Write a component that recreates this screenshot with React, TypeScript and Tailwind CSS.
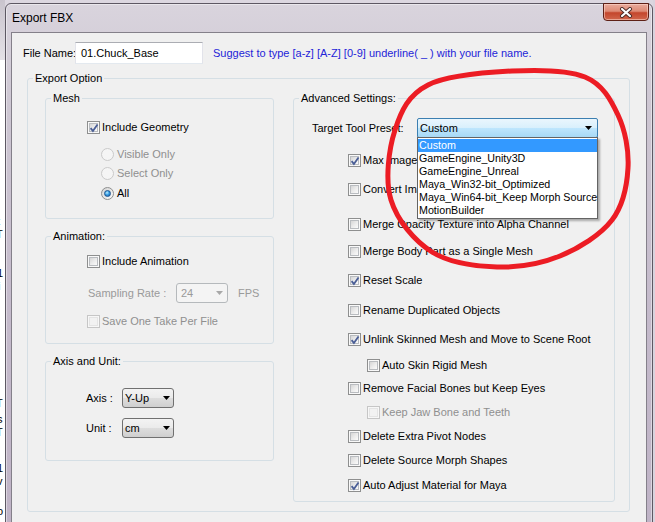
import React from "react";

type BoxProps = { checked?: boolean; disabled?: boolean };

function CheckBox({ checked, disabled }: BoxProps) {
  return (
    <span
      className={`relative flex h-[13px] w-[13px] shrink-0 items-center justify-center border ${
        disabled ? "border-[#c6c6c6] bg-[#f7f7f7]" : "border-[#8e8f8f] bg-[#f9f9f9]"
      }`}
    >
      <span
        className={`h-[9px] w-[9px] border ${
          disabled
            ? "border-[#e4e4e4] bg-[#f2f2f2]"
            : "border-[#b9bcc0] bg-gradient-to-br from-[#d6d6d6] via-[#ebebeb] to-[#fbfbfb]"
        }`}
      />
      {checked && (
        <svg className="absolute left-[1px] top-[1px]" width="10" height="10" viewBox="0 0 10 10">
          <path d="M1.6 5.1 L3.9 7.9 L8.5 1.4" fill="none" stroke="#4a5e96" strokeWidth="1.8" />
        </svg>
      )}
    </span>
  );
}

function Radio({ checked, disabled }: BoxProps) {
  return (
    <span
      className={`flex h-[13px] w-[13px] shrink-0 items-center justify-center rounded-full border ${
        disabled
          ? "border-[#cacaca] bg-[#f5f5f5]"
          : "border-[#8e8f8f] bg-gradient-to-br from-[#d4d4d4] to-[#fbfbfb]"
      }`}
    >
      {checked && (
        <span className="h-[7px] w-[7px] rounded-full border border-[#1d5590] bg-[radial-gradient(circle_at_40%_35%,#bdeeff_0%,#3aa0e6_45%,#0f5aa8_100%)]" />
      )}
    </span>
  );
}

function CheckRow({
  label,
  checked,
  disabled,
  className,
}: BoxProps & { label: string; className: string }) {
  return (
    <div className={`flex h-[13px] items-center gap-[2px] whitespace-nowrap ${className}`}>
      <CheckBox checked={checked} disabled={disabled} />
      <span className={disabled ? "text-[#8f8f8f]" : ""}>{label}</span>
    </div>
  );
}

function RadioRow({
  label,
  checked,
  disabled,
  className,
}: BoxProps & { label: string; className: string }) {
  return (
    <div className={`flex h-[13px] items-center gap-[3px] whitespace-nowrap ${className}`}>
      <Radio checked={checked} disabled={disabled} />
      <span className={disabled ? "text-[#8f8f8f]" : ""}>{label}</span>
    </div>
  );
}

function Arrow({ color }: { color: string }) {
  return (
    <svg width="7" height="4" viewBox="0 0 7 4" className="shrink-0">
      <path d="M0 0 H7 L3.5 4 Z" fill={color} />
    </svg>
  );
}

function Combo({
  value,
  className,
  disabled,
}: {
  value: string;
  className: string;
  disabled?: boolean;
}) {
  return (
    <div
      className={`flex h-[20px] shrink-0 items-center justify-between rounded-[3px] border ${
        disabled
          ? "border-[#b5b9bc] bg-[#f4f4f4] text-[#9a9a9a]"
          : "border-[#707070] bg-[linear-gradient(180deg,#f3f3f3_0%,#ebebeb_48%,#dddddd_52%,#cfcfcf_100%)]"
      } ${className}`}
    >
      <span>{value}</span>
      <Arrow color={disabled ? "#a8a8a8" : "#000000"} />
    </div>
  );
}

function Group({
  title,
  className,
  children,
}: {
  title: string;
  className: string;
  children?: React.ReactNode;
}) {
  return (
    <fieldset className={`min-w-0 rounded-[3px] border border-[#d5dfe5] ${className}`}>
      <legend className="ml-[5px] px-[2px] leading-[13px]">{title}</legend>
      {children}
    </fieldset>
  );
}

const presets = [
  "Custom",
  "GameEngine_Unity3D",
  "GameEngine_Unreal",
  "Maya_Win32-bit_Optimized",
  "Maya_Win64-bit_Keep Morph Source",
  "MotionBuilder",
];

const advanced: (BoxProps & { label: string; cls: string })[] = [
  { label: "Max Image Size", checked: true, cls: "mt-[16px] pl-[54px]" },
  { label: "Convert Image to PNG", cls: "mt-[16px] pl-[54px]" },
  { label: "Merge Opacity Texture into Alpha Channel", cls: "mt-[22px] pl-[54px]" },
  { label: "Merge Body Part as a Single Mesh", cls: "mt-[14px] pl-[54px]" },
  { label: "Reset Scale", checked: true, cls: "mt-[16px] pl-[54px]" },
  { label: "Rename Duplicated Objects", cls: "mt-[17px] pl-[54px]" },
  { label: "Unlink Skinned Mesh and Move to Scene Root", checked: true, cls: "mt-[16px] pl-[54px]" },
  { label: "Auto Skin Rigid Mesh", cls: "mt-[13px] pl-[73px]" },
  { label: "Remove Facial Bones but Keep Eyes", cls: "mt-[10px] pl-[54px]" },
  { label: "Keep Jaw Bone and Teeth", disabled: true, cls: "mt-[11px] pl-[73px]" },
  { label: "Delete Extra Pivot Nodes", cls: "mt-[11px] pl-[54px]" },
  { label: "Delete Source Morph Shapes", cls: "mt-[11px] pl-[54px]" },
  { label: "Auto Adjust Material for Maya", checked: true, cls: "mt-[12px] pl-[54px]" },
];

// loop around the preset list, smoothed with a closed Catmull-Rom spline
const loop: [number, number][] = [
  [512, 71], [585, 77], [618, 115], [628, 168], [612, 220], [560, 256],
  [497, 267], [432, 252], [391, 200], [395, 130], [428, 85],
];

function splinePath(pts: [number, number][]) {
  const n = pts.length;
  let d = `M${pts[0][0]} ${pts[0][1]}`;
  for (let i = 0; i < n; i++) {
    const p0 = pts[(i - 1 + n) % n];
    const p1 = pts[i];
    const p2 = pts[(i + 1) % n];
    const p3 = pts[(i + 2) % n];
    const c1x = p1[0] + (p2[0] - p0[0]) / 6;
    const c1y = p1[1] + (p2[1] - p0[1]) / 6;
    const c2x = p2[0] - (p3[0] - p1[0]) / 6;
    const c2y = p2[1] - (p3[1] - p1[1]) / 6;
    d += ` C${c1x.toFixed(1)} ${c1y.toFixed(1)} ${c2x.toFixed(1)} ${c2y.toFixed(1)} ${p2[0]} ${p2[1]}`;
  }
  return d + " Z";
}

function CloseButton() {
  return (
    <div className="-mr-[2px] -mt-[1px] flex h-[18px] w-[46px] items-center justify-center rounded-b-[4px] border border-[#5e2016] bg-[linear-gradient(180deg,#e9ab9c_0%,#dd8a75_45%,#c4462c_55%,#d0664c_100%)] shadow-[inset_0_0_0_1px_rgba(255,220,210,0.55)]">
      <svg width="14" height="11" viewBox="0 0 14 11">
        <path d="M3 2 L11 9 M11 2 L3 9" stroke="#4a2a26" strokeWidth="4" strokeLinecap="round" />
        <path d="M3 2 L11 9 M11 2 L3 9" stroke="#ffffff" strokeWidth="2.2" strokeLinecap="round" />
      </svg>
    </div>
  );
}

export default function App() {
  return (
    <div className="relative flex h-[522px] w-[655px] overflow-hidden bg-[#dcd7e0] font-['Liberation_Sans',Arial,sans-serif] text-[11px] leading-[13px] text-black">
      {/* editor text peeking out behind the dialog */}
      <div className="flex w-[5px] shrink-0 flex-col overflow-hidden bg-white text-[11px] leading-[13px]">
        <div className="h-[60px] shrink-0 bg-[linear-gradient(180deg,#c9c4cd,#e4e1e6)]" />
        <div className="mt-[155px] -ml-[3px]">t</div>
        <div className="-ml-[4px]">T</div>
        <div className="mt-[26px] -ml-[3px]">1</div>
        <div className="-ml-[2px]">i</div>
        <div className="mt-[104px] -ml-[4px]">T</div>
        <div className="mt-[3px] -ml-[3px]">s</div>
        <div className="-ml-[4px]">T</div>
        <div className="mt-[23px] -ml-[3px]">1</div>
        <div className="-ml-[3px]">v</div>
        <div className="mt-[17px] -ml-[3px]">o</div>
      </div>

      {/* dialog window */}
      <div className="mt-[3px] flex h-[530px] w-[648px] shrink-0 flex-col rounded-t-[6px] border border-[#5d5863] bg-[linear-gradient(180deg,#d9d4dd_0%,#cdc6d2_20%,#c4bacb_60%,#bfb3c6_100%)] px-[5px] shadow-[inset_0_0_0_1px_rgba(255,255,255,0.45)]">
        <div className="flex h-[28px] shrink-0 items-start">
          <span className="ml-[1px] mt-[7px] text-[12px] leading-[14px] text-black">Export FBX</span>
          <div className="flex-1" />
          <CloseButton />
        </div>

        <div className="flex flex-1 flex-col border border-[#84808a] bg-[#f0f0f0]">
          {/* file name */}
          <div className="mt-[9px] flex items-center pl-[11px]">
            <span className="w-[52px] shrink-0 whitespace-nowrap">File Name:</span>
            <div className="flex h-[22px] w-[128px] shrink-0 items-center border border-[#abadb3] border-l-[#e2e3ea] border-r-[#e2e3ea] border-b-[#e3e9ef] bg-white pl-[5px]">
              01.Chuck_Base
            </div>
            <span className="ml-[10px] whitespace-nowrap text-[#2424d8]">
              Suggest to type [a-z] [A-Z] [0-9] underline( _ ) with your file name.
            </span>
          </div>

          {/* export option */}
          <Group title="Export Option" className="ml-[15px] mt-[8px] h-[440px] w-[603px]">
            <div className="mt-[7px] flex gap-[19px] pl-[17px]">
              <div className="flex w-[229px] shrink-0 flex-col">
                <Group title="Mesh" className="h-[127px]">
                  <CheckRow label="Include Geometry" checked className="mt-[16px] pl-[41px]" />
                  <RadioRow label="Visible Only" disabled className="mt-[14px] pl-[55px]" />
                  <RadioRow label="Select Only" disabled className="mt-[6px] pl-[55px]" />
                  <RadioRow label="All" checked className="mt-[7px] pl-[55px]" />
                </Group>

                <Group title="Animation:" className="mt-[11px] h-[114px]">
                  <CheckRow label="Include Animation" className="mt-[12px] pl-[41px]" />
                  <div className="mt-[15px] flex items-center pl-[42px] text-[#9a9a9a]">
                    <span className="w-[88px] shrink-0 whitespace-nowrap">Sampling Rate :</span>
                    <Combo value="24" disabled className="w-[52px] pl-[4px] pr-[4px]" />
                    <span className="ml-[10px]">FPS</span>
                  </div>
                  <CheckRow label="Save One Take Per File" disabled className="mt-[12px] pl-[41px]" />
                </Group>

                <Group title="Axis and Unit:" className="mt-[11px] h-[106px]">
                  <div className="mt-[20px] flex items-center pl-[40px]">
                    <span className="w-[36px] shrink-0 whitespace-nowrap">Axis :</span>
                    <Combo value="Y-Up" className="w-[52px] pl-[2px] pr-[3px]" />
                  </div>
                  <div className="mt-[10px] flex items-center pl-[40px]">
                    <span className="w-[36px] shrink-0 whitespace-nowrap">Unit :</span>
                    <Combo value="cm" className="w-[52px] pl-[2px] pr-[3px]" />
                  </div>
                </Group>
              </div>

              <Group title="Advanced Settings:" className="h-[410px] w-[322px] shrink-0">
                <div className="mt-[13px] flex items-center pl-[18px]">
                  <span className="w-[105px] shrink-0 whitespace-nowrap">Target Tool Preset:</span>
                  <div className="relative">
                    <div className="flex h-[20px] w-[181px] items-center justify-between rounded-[2px] border border-[#3c7fb1] bg-[linear-gradient(180deg,#eaf6fd_0%,#d9f0fc_48%,#bee6fd_52%,#a7d9f5_100%)] pl-[2px] pr-[5px]">
                      <span>Custom</span>
                      <Arrow color="#000000" />
                    </div>
                    {/* open preset list */}
                    <ul className="absolute left-0 top-[19px] z-10 w-[181px] border border-[#646464] bg-white py-[1px] text-[10.7px] shadow-[2px_2px_2px_rgba(0,0,0,0.3)]">
                      {presets.map((p, i) => (
                        <li
                          key={p}
                          className={`h-[13px] whitespace-nowrap pl-[1px] leading-[13px] ${
                            i === 0 ? "bg-[#3399ff] text-white" : "text-black"
                          }`}
                        >
                          {p}
                        </li>
                      ))}
                    </ul>
                  </div>
                </div>
                {advanced.map((r) => (
                  <CheckRow
                    key={r.label}
                    label={r.label}
                    checked={r.checked}
                    disabled={r.disabled}
                    className={r.cls}
                  />
                ))}
              </Group>
            </div>
          </Group>
        </div>
      </div>

      <div className="flex-1 bg-[#d9d3dd]" />

      {/* red marker around the preset list */}
      <svg
        className="pointer-events-none absolute left-0 top-0 z-20"
        width="655"
        height="522"
        viewBox="0 0 655 522"
      >
        <path d={splinePath(loop)} fill="none" stroke="#ec1c24" strokeWidth="5" strokeLinejoin="round" />
      </svg>
    </div>
  );
}
